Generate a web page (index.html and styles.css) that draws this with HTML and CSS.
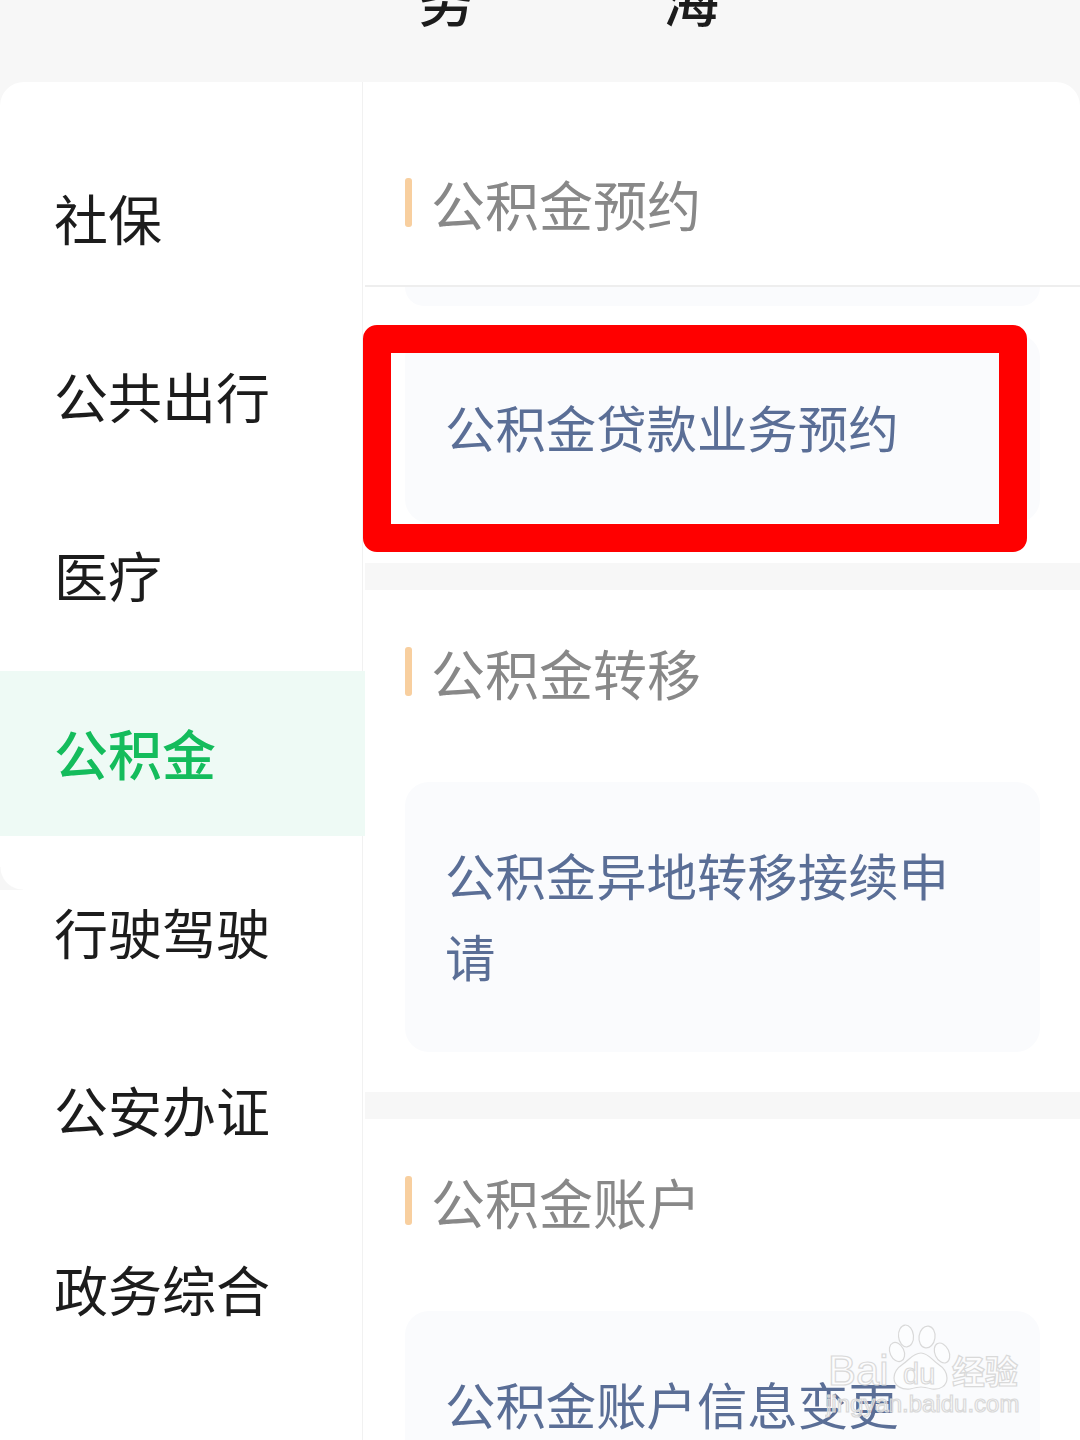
FILE: index.html
```html
<!DOCTYPE html>
<html lang="zh-CN">
  <head>
    <meta name="viewport" content="width=device-width, initial-scale=1.0" />
    <title>公积金</title>
    <link rel="stylesheet" href="styles.css">
  </head>
  <body>
    <div class="top-title">
      <span>务</span>
      <span>海</span>
    </div>

    <div class="panel">
      <div class="side">
        <div class="side-item">社保</div>
        <div class="side-item">公共出行</div>
        <div class="side-item">医疗</div>
        <div class="side-item active">公积金</div>
        <div class="side-item">行驶驾驶</div>
        <div class="side-item">公安办证</div>
        <div class="side-item">政务综合</div>
        <div class="corner"></div>
      </div>

      <div class="main">
        <div class="sec-head first">
          <div class="bar"></div>
          <div class="sec-title">公积金预约</div>
        </div>
        <div class="peek"></div>
        <div class="link-card">公积金贷款业务预约</div>
        <div class="band"></div>

        <div class="sec-head">
          <div class="bar"></div>
          <div class="sec-title">公积金转移</div>
        </div>
        <div class="link-card">公积金异地转移接续申请</div>
        <div class="band"></div>

        <div class="sec-head">
          <div class="bar"></div>
          <div class="sec-title">公积金账户</div>
        </div>
        <div class="link-card">公积金账户信息变更</div>
      </div>
    </div>

    <!-- red mark drawn over the screenshot -->
    <div class="red-mark"></div>

    <!-- watermark -->
    <svg class="watermark" width="200" height="95" viewBox="0 0 200 95">
      <g class="wm-paw">
        <ellipse cx="81" cy="13" rx="7.5" ry="11" transform="rotate(-5 81 13)" />
        <ellipse cx="102" cy="14" rx="8" ry="11" transform="rotate(8 102 14)" />
        <ellipse cx="72" cy="29" rx="7" ry="10" transform="rotate(-25 72 29)" />
        <ellipse cx="117" cy="30" rx="7" ry="10.5" transform="rotate(-25 117 30)" />
        <path d="M96 30c7 0 11 7 17 11 6 4 9 8 9 14 0 8-7 12-15 11-4-1-8-2-11-2s-7 1-11 2c-8 1-16-3-16-11 0-6 3-10 9-14 6-4 10-11 18-11z" />
      </g>
      <text class="wm-big" x="3" y="62">Bai</text>
      <text class="wm-small" x="78" y="61">du</text>
      <text class="wm-cn" x="127" y="61">经验</text>
      <text class="wm-url" x="1" y="89">jingyan.baidu.com</text>
    </svg>
  </body>
</html>
```

FILE: styles.css
```css
* {
  padding: 0;
  margin: 0;
  box-sizing: border-box;
  font-family: "Noto Sans CJK SC", "Noto Sans", sans-serif;
}
html,
body {
  width: 1080px;
  height: 1440px;
  overflow: hidden;
}
body {
  position: relative;
  background-color: #f7f7f7;
  color: #1c1c1c;
}
.top-title {
  display: flex;
  gap: 189px;
  height: 82px;
  padding-left: 418px;
  font-size: 56px;
  font-weight: 500;
  line-height: 53px;
}
.top-title span {
  margin-top: -29px;
  height: 53px;
}
.panel {
  display: flex;
  height: 1358px;
  background-color: #ffffff;
  border-radius: 24px 24px 0 0;
}
.side {
  position: relative;
  flex: 0 0 363px;
  display: flex;
  flex-direction: column;
  gap: 13.5px;
  padding-top: 53.5px;
  border-right: 1px solid #f1f1f1;
}
.side-item {
  flex: 0 0 165px;
  display: flex;
  align-items: center;
  padding: 0 0 2px 54px;
  font-size: 54px;
}
.side-item.active {
  margin-right: -3px;
  background-color: #eefaf5;
  color: #14bc5c;
  font-weight: 500;
}
.corner {
  position: absolute;
  left: 0;
  top: 785px;
  width: 23px;
  height: 23px;
  background: radial-gradient(circle at 100% 0, transparent 22px, #f6f6f6 23px);
}
.main {
  flex: 1;
  margin-left: 2px;
}
.sec-head {
  display: flex;
  align-items: flex-start;
  height: 192px;
  padding: 57px 0 0 40px;
}
.sec-head.first {
  height: 205px;
  padding-top: 96px;
  border-bottom: 2px solid #eeeeee;
}
.bar {
  flex: 0 0 7px;
  height: 49px;
  margin-right: 19px;
  background-color: #f8cf9f;
  border-radius: 3px;
}
.sec-title {
  font-size: 54px;
  line-height: 51px;
  color: #888888;
}
.peek {
  height: 19px;
  margin: 0 40px 28px;
  background-color: #fafbfd;
  border-radius: 0 0 24px 24px;
}
.link-card {
  margin: 0 40px 40px;
  padding: 53px 60px 55.5px 40px;
  background-color: #fafbfd;
  border-radius: 24px;
  font-size: 50.4px;
  line-height: 80.5px;
  color: #5a6e96;
}
.band {
  height: 27px;
  background-color: #f7f7f7;
}
.red-mark {
  position: absolute;
  left: 363px;
  top: 325px;
  width: 664px;
  height: 227px;
  border: 28px solid #ff0000;
  border-radius: 14px;
}
.watermark {
  position: absolute;
  left: 825px;
  top: 1323px;
}
.watermark text,
.wm-paw {
  fill: rgba(255, 255, 255, 0.45);
  stroke: #d9d9d9;
  stroke-width: 1.2;
}
.wm-big {
  font-family: "Liberation Sans", sans-serif;
  font-size: 42px;
}
.wm-small {
  font-family: "Liberation Sans", sans-serif;
  font-size: 29px;
}
.wm-cn {
  font-family: "Noto Sans CJK SC", sans-serif;
  font-size: 33px;
  font-weight: 700;
}
.wm-url {
  font-family: "Liberation Sans", sans-serif;
  font-size: 24px;
}
```
